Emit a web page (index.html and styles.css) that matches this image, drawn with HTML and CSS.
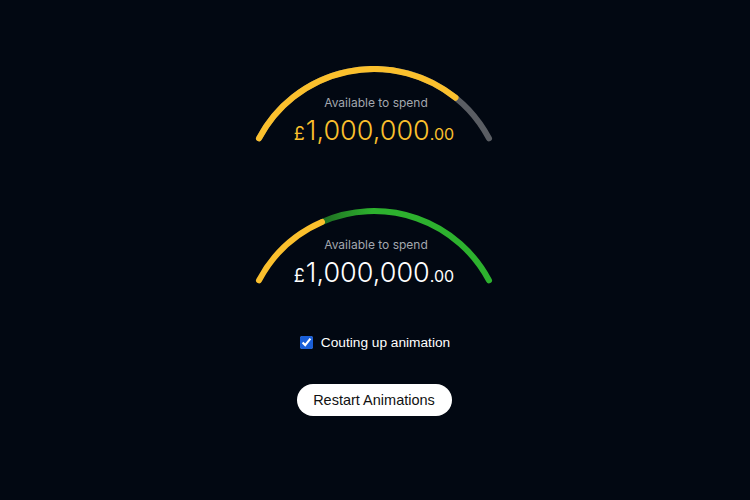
FILE: index.html
```html
<!DOCTYPE html>
<html>

<head>
    <meta charset="UTF-8">
    <title>Spend gauge</title>
    <link rel="stylesheet" href="styles.css">
</head>

<body>
    <main class="page">

        <div class="gauge">
            <svg class="gauge-arc" width="240" height="76" viewBox="0 0 240 76">
                <path class="track" d="M5 72.4 A130 130 0 0 1 235 72.4" />
                <path class="fill-yellow" d="M5 72.4 A130 130 0 0 1 201.5 31.7" />
            </svg>
            <div class="gauge-text">
                <p class="label">Available to spend</p>
                <p class="amount amount-yellow"><span class="cur">£</span>1,000,000<span class="pence">.00</span></p>
            </div>
        </div>

        <div class="gauge gauge-second">
            <svg class="gauge-arc" width="240" height="76" viewBox="0 0 240 76">
                <defs>
                    <linearGradient id="greenFade" gradientUnits="userSpaceOnUse" x1="68" y1="0" x2="118" y2="0">
                        <stop offset="0" stop-color="#1f6e22" />
                        <stop offset="1" stop-color="#2db12e" />
                    </linearGradient>
                </defs>
                <path class="fill-green" d="M68 13.9 A130 130 0 0 1 235 72.4" />
                <path class="fill-yellow" d="M5 72.4 A130 130 0 0 1 68 13.9" />
            </svg>
            <div class="gauge-text">
                <p class="label">Available to spend</p>
                <p class="amount"><span class="cur">£</span>1,000,000<span class="pence">.00</span></p>
            </div>
        </div>

        <label class="toggle">
            <input type="checkbox" checked>
            Couting up animation
        </label>

        <button class="restart">Restart Animations</button>

    </main>
</body>

</html>
```

FILE: styles.css
```css
body {
    margin: 0;
    background-color: #020812;
    min-height: 100vh;
}

.page {
    display: flex;
    flex-direction: column;
    align-items: center;
    padding-top: 66px;
    padding-right: 2px;
}

.gauge {
    display: grid;
    width: 240px;
    height: 76px;
}

.gauge > * {
    grid-area: 1 / 1;
}

.gauge-second {
    margin-top: 66px;
}

.gauge-arc {
    display: block;
}

.gauge-arc path {
    fill: none;
    stroke-width: 6;
    stroke-linecap: round;
}

.track {
    stroke: #5a5d63;
}

.fill-yellow {
    stroke: #fbc02d;
}

.fill-green {
    stroke: url(#greenFade);
}

.gauge-text {
    padding-top: 29px;
    padding-left: 4px;
    text-align: center;
    font-family: Inter, "Noto Sans", sans-serif;
}

.label {
    margin: 0;
    font-size: 12px;
    line-height: 15px;
    color: #a3a7ae;
}

.amount {
    margin: 5px 0 0 -4px;
    font-size: 27px;
    line-height: 32px;
    font-weight: 300;
    color: #ffffff;
}

.amount-yellow {
    color: #fbc02d;
}

.cur {
    font-size: 18px;
    font-weight: 400;
    margin-right: 1px;
}

.pence {
    font-size: 16px;
    font-weight: 400;
}

.toggle {
    margin-top: 51px;
    padding-left: 2px;
    display: flex;
    align-items: center;
    gap: 8px;
    font-family: "Liberation Sans", Arial, sans-serif;
    font-size: 13.7px;
    color: #ffffff;
}

.toggle input {
    margin: 0;
    width: 13px;
    height: 13px;
    accent-color: #1a5fd8;
}

.restart {
    margin-top: 34px;
    width: 155px;
    height: 32px;
    border: none;
    border-radius: 16px;
    background-color: #ffffff;
    color: #111111;
    font-family: "Liberation Sans", Arial, sans-serif;
    font-size: 14.5px;
    cursor: pointer;
}
```
